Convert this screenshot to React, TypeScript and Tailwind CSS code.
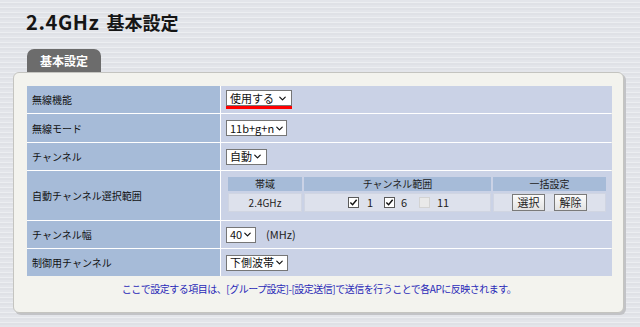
import React from 'react';
import { ChevronDown } from 'lucide-react';

const font = { fontFamily: '"Noto Sans CJK JP", "Noto Sans", sans-serif' };

const Select: React.FC<{ label: string; width: string }> = ({ label, width }) => (
  <div
    className={`flex items-center justify-between h-[16px] ${width} bg-white border border-[#767676] pl-[3px] pr-[3px] text-[11px] leading-none text-[#111] whitespace-nowrap`}
  >
    <span>{label}</span>
    <ChevronDown className="shrink-0 w-[11px] h-[11px] text-[#111]" strokeWidth={2.6} />
  </div>
);

const Check: React.FC<{ checked?: boolean; disabled?: boolean }> = ({ checked, disabled }) => (
  <span
    className={`shrink-0 inline-flex items-center justify-center w-[11px] h-[11px] border ${
      disabled ? 'border-[#d3d3d3] bg-[#e9e9e9]' : 'border-[#5a5a5a] bg-white'
    }`}
  >
    {checked && (
      <svg viewBox="0 0 10 10" className="w-[9px] h-[9px]">
        <path d="M1.5 5 L4 7.5 L8.5 2" fill="none" stroke="#111" strokeWidth="1.6" />
      </svg>
    )}
  </span>
);

const Button: React.FC<{ label: string }> = ({ label }) => (
  <div className="flex items-center justify-center w-[33px] h-[17px] border border-[#7a7a7a] bg-[linear-gradient(#fbfbfb,#e3e3e3)] text-[11px] leading-none text-[#222]">
    {label}
  </div>
);

const Label: React.FC<{ children: React.ReactNode }> = ({ children }) => (
  <div className="bg-[#a6bbd8] flex items-center pl-[5px] text-[10px] text-[#111]">{children}</div>
);

const Value: React.FC<{ children: React.ReactNode; className?: string }> = ({ children, className = '' }) => (
  <div className={`bg-[#cad2e6] flex items-center pl-[5px] ${className}`}>{children}</div>
);

export default function App() {
  return (
    <div
      className="w-[640px] h-[327px] overflow-hidden bg-[repeating-linear-gradient(180deg,#e3e5ea_0px,#e3e5ea_2px,#eceef1_2px,#eceef1_3px,#dfe1e6_3px,#dfe1e6_5px)]"
      style={font}
    >
      <div className="pt-[9px] pl-[26px] flex items-baseline font-bold leading-[25px] text-[#151515]">
        <span className="text-[20px] tracking-[0.6px]">2.4GHz</span>
        <span className="ml-[7px] text-[18px]">基本設定</span>
      </div>

      <div className="pt-[14px] pl-[27px]">
        <div className="w-[74px] h-[23px] rounded-t-[7px] bg-[#6c6c6c] flex items-center justify-center text-[12px] font-bold text-white">
          基本設定
        </div>
      </div>

      <div className="ml-[13px] w-[611px] h-[241px] rounded-[6px] border border-[#c4c4c0] bg-[#f3f3ee] shadow-[2px_2px_0_#c2c3c6] pt-[13px] pl-[13px] pr-[12px]">
        <div className="bg-white grid grid-cols-[193px_391px] grid-rows-[27px_28px_27px_49px_27px_27px] gap-px">
          <Label>無線機能</Label>
          <Value>
            <div className="flex flex-col">
              <Select label="使用する" width="w-[66px]" />
              <div className="h-[3px] bg-[#ff0000] w-[66px]" />
            </div>
          </Value>

          <Label>無線モード</Label>
          <Value>
            <Select label="11b+g+n" width="w-[61px]" />
          </Value>

          <Label>チャンネル</Label>
          <Value>
            <Select label="自動" width="w-[41px]" />
          </Value>

          <Label>自動チャンネル選択範囲</Label>
          <Value className="!items-start pt-[6px] pl-[7px]">
            <div className="grid grid-cols-[74px_187px_113px] grid-rows-[14px_19px] gap-x-[2px] gap-y-[2px] text-[10px] text-[#222] leading-none">
              <div className="bg-[#a6bbd8] flex items-center justify-center">帯域</div>
              <div className="bg-[#a6bbd8] flex items-center justify-center">チャンネル範囲</div>
              <div className="bg-[#a6bbd8] flex items-center justify-center">一括設定</div>

              <div className="bg-[#dde1ec] border border-[#d0d5e2] flex items-center justify-center">2.4GHz</div>
              <div className="bg-[#dde1ec] border border-[#d0d5e2] flex items-center pl-[43px] text-[11px]">
                <Check checked />
                <span className="ml-[8px] w-[17px]">1</span>
                <Check checked />
                <span className="ml-[6px] w-[18px]">6</span>
                <Check disabled />
                <span className="ml-[7px]">11</span>
              </div>
              <div className="bg-[#dde1ec] border border-[#d0d5e2] flex items-center justify-center gap-[9px]">
                <Button label="選択" />
                <Button label="解除" />
              </div>
            </div>
          </Value>

          <Label>チャンネル幅</Label>
          <Value>
            <Select label="40" width="w-[30px]" />
            <span className="ml-[10px] text-[11px] text-[#222]">(MHz)</span>
          </Value>

          <Label>制御用チャンネル</Label>
          <Value>
            <Select label="下側波帯" width="w-[62px]" />
          </Value>
        </div>

        <div className="pt-[5px] text-center text-[10px] tracking-[-0.5px] text-[#2a2ab8]">
          ここで設定する項目は、[グループ設定]-[設定送信]で送信を行うことで各APに反映されます。
        </div>
      </div>
    </div>
  );
}
